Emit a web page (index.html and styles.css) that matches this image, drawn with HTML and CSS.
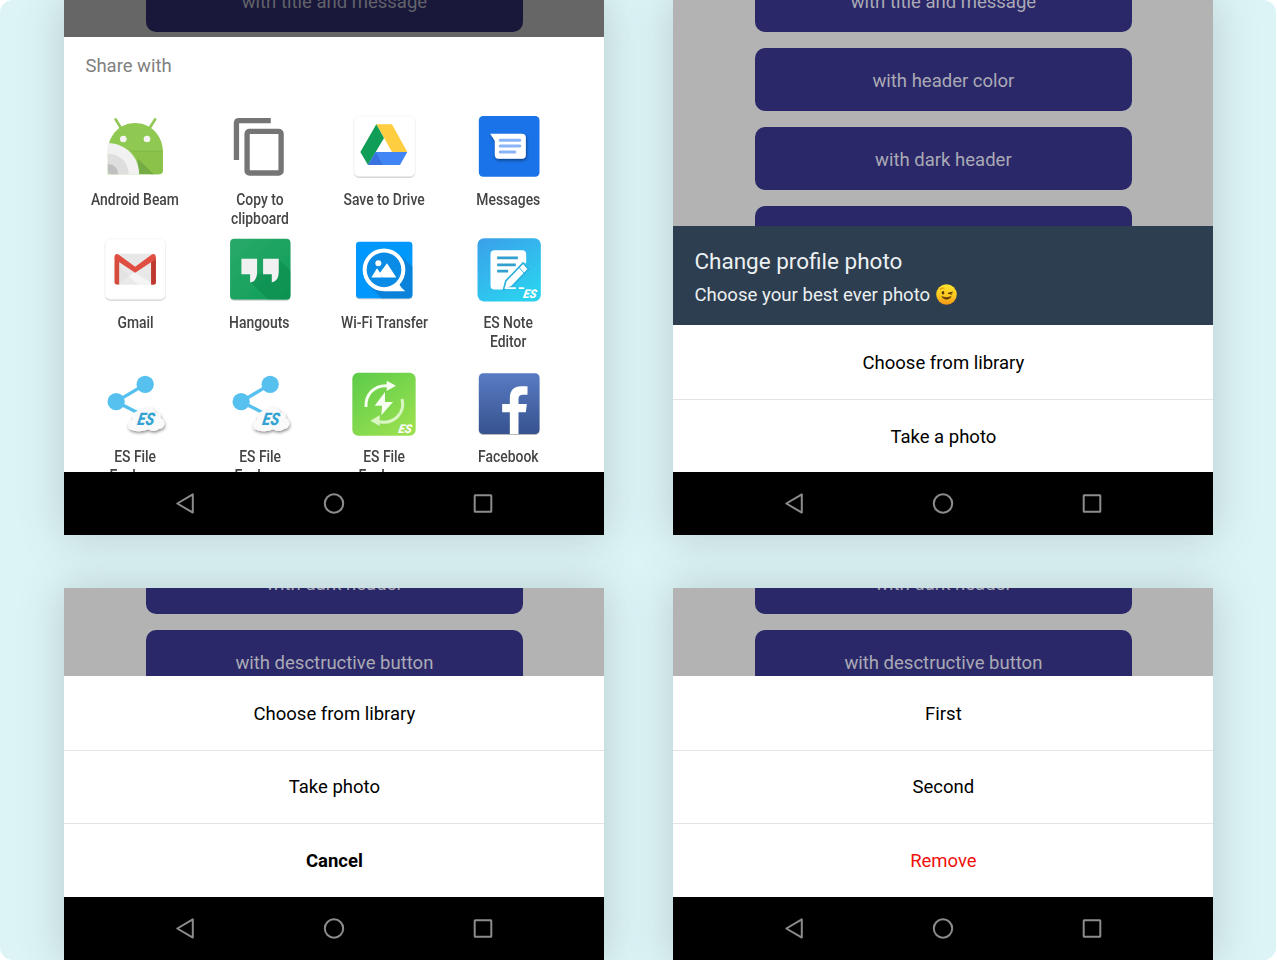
FILE: index.html
```html
<!DOCTYPE html>
<html lang="en">
<head>
<meta charset="utf-8">
<title>Action sheets</title>
<link rel="stylesheet" href="styles.css">
</head>
<body>
<svg class="defs" width="0" height="0">
  <defs>
    <g id="nav-icons" fill="none" stroke="#8c8c8c" stroke-width="2" stroke-linejoin="round">
      <path d="M9.300 31.500 24.800 22.400V40.600Z"/>
      <circle cx="166" cy="31.500" r="9.200"/>
      <rect x="306.700" y="23.200" width="16.600" height="16.600" rx=".5"/>
    </g>
    <g id="es-share">
      <path d="M170 125 257 73M170 125 235 158" stroke="#56c1ef" stroke-width="10" fill="none"/>
      <circle cx="170" cy="125" r="26" fill="#56c1ef"/><circle cx="257" cy="73" r="26" fill="#56c1ef"/>
      <path d="M216 210C202 207 202 184 218 180C216 160 232 148 245 154C252 136 284 137 288 159C302 157 306 166 303 174C320 181 318 206 299 207Q282 218 266 208Q244 219 216 210Z" fill="#fafafa" filter="url(#cloud)"/>
      <text transform="translate(232 196) skewX(-10)" class="es es-blue" textLength="50" lengthAdjust="spacingAndGlyphs">ES</text>
    </g>
    <filter id="cloud" x="-20%" y="-20%" width="140%" height="150%"><feDropShadow dx="2" dy="5" stdDeviation="4" flood-opacity=".45"/></filter>
    <filter id="soft" x="-20%" y="-20%" width="140%" height="150%"><feDropShadow dx="0" dy="3" stdDeviation="1.500" flood-opacity=".28"/></filter>
    <linearGradient id="g-note" x1="0" y1="0" x2=".6" y2="1"><stop stop-color="#3b9fea"/><stop offset="1" stop-color="#2bd0ef"/></linearGradient>
    <linearGradient id="g-green" x1="0" y1="0" x2=".7" y2="1"><stop stop-color="#5bcb4a"/><stop offset="1" stop-color="#98e04f"/></linearGradient>
    <linearGradient id="g-fb" x1="0" y1="0" x2="0" y2="1"><stop stop-color="#587bc3"/><stop offset="1" stop-color="#37528f"/></linearGradient>
    <linearGradient id="g-hang" x1="0" y1="0" x2="1" y2="1"><stop stop-color="#2aaa69"/><stop offset="1" stop-color="#0f9d58"/></linearGradient>
    <linearGradient id="g-emoji" x1="0" y1="0" x2="0" y2="1"><stop stop-color="#ffe32e"/><stop offset=".6" stop-color="#fcc51f"/><stop offset="1" stop-color="#f29418"/></linearGradient>
  </defs>
</svg>
<main class="board">
  <section class="phone">
    <div class="backdrop backdrop-share">
      <div class="btn">with title and message</div>
    </div>
    <div class="share">
      <h2 class="share-title">Share with</h2>
      <div class="apps">
        <div class="app">
          <svg class="app-icon" viewBox="121.500 336 210 210">
            <path d="M168 358 184 383M287 358 271 383" stroke="#92c755" stroke-width="8" stroke-linecap="round"/>
            <path d="M145 523V450C148 402 184 369 227 369S307 402 310 450V511Q310 523 298 523Z" fill="#8fc952"/>
            <path d="M216 453H310V511Q310 523 298 523H274L235 480Z" fill="#8bc34a"/>
            <path d="M234 475 282 523H238Z" fill="#699c3f" opacity=".65"/>
            <path d="M214 453H310" stroke="#7bb443" stroke-width="2"/>
            <path d="M145 429C200 431 238 470 239 523H157Q145 523 145 511Z" fill="#f1f1f1"/>
            <path d="M145 461C181 461 207 487 207 523H157Q145 523 145 511Z" fill="#dedede"/>
            <path d="M145 492C163 492 176 505 176 523H157Q145 523 145 511Z" fill="#c0c0c0"/>
            <circle cx="191.500" cy="417" r="10" fill="#f4f4f4"/><circle cx="262.500" cy="417" r="10" fill="#f4f4f4"/>
          </svg>
          <span class="app-name">Android Beam</span>
        </div>
        <div class="app">
          <svg class="app-icon" viewBox="494.700 336 210 210" fill="none" stroke="#757575" stroke-width="16">
            <path d="M529 480V370Q529 362 537 362H632"/>
            <rect x="561" y="394" width="102" height="125" rx="7"/>
          </svg>
          <span class="app-name">Copy to<br>clipboard</span>
        </div>
        <div class="app">
          <svg class="app-icon" viewBox="58 336 210 210">
            <rect x="73" y="348" width="183" height="181" rx="14" fill="#fff" stroke="#eee" stroke-width="1.500" filter="url(#soft)"/>
            <path d="M140 373H187L233 456H187Z" fill="#ffcd40"/>
            <path d="M140 373 163 414 115 495 92 456Z" fill="#0f9d58"/>
            <path d="M138 456H233L211 495H115Z" fill="#4285f4"/>
            <path d="M138 456 159 495H115Z" fill="#3367d6" opacity=".65"/>
          </svg>
          <span class="app-name">Save to Drive</span>
        </div>
        <div class="app">
          <svg class="app-icon" viewBox="431.500 336 210 210">
            <rect x="446" y="348" width="182" height="182" rx="13" fill="#1a73e8"/>
            <path d="M480 401H575Q587 401 587 413V464Q587 476 575 476H506Q494 476 494 464V422Z" fill="#fff" filter="url(#cloud)"/>
            <path d="M510 421H569M510 438H569M510 456H554" stroke="#8ab4f8" stroke-width="9" stroke-linecap="round"/>
          </svg>
          <span class="app-name">Messages</span>
        </div>
        <div class="app">
          <svg class="app-icon" viewBox="121.500 31.500 210 210">
            <rect x="137" y="43" width="181" height="181" rx="14" fill="#fff" stroke="#eee" stroke-width="1.500" filter="url(#soft)"/>
            <path d="M172 88H282V180H172Z" fill="#e8e8e8"/>
            <path d="M172 180 225 143 282 180Z" fill="#f5f5f5"/>
            <path d="M172 120 235 180H172Z" fill="#dedede" opacity=".5"/>
            <path d="M165 98H179V180H171Q165 180 165 174ZM275 98H289V174Q289 180 283 180H275Z" fill="#d54b3e"/>
            <path d="M275 113 289 103V174Q289 180 283 180H275Z" fill="#be3a30"/>
            <path d="M165 98Q166 85 177 90L227 127 277 90Q288 85 289 98L287 105 227 145 167 105Z" fill="#e04e42"/>
          </svg>
          <span class="app-name">Gmail</span>
        </div>
        <div class="app">
          <svg class="app-icon" viewBox="494.700 31.500 210 210">
            <rect x="510" y="43" width="181" height="182" rx="12" fill="url(#g-hang)" filter="url(#soft)"/>
            <path d="M656 104 691 139V213Q691 225 679 225H624L572 173 590 150 610 147Z" fill="#0b8a4c" opacity=".55"/>
            <path d="M544 103H591V142Q591 171 570 174V149H544ZM609 103H656V142Q656 171 635 174V149H609Z" fill="#f1f1f1"/>
          </svg>
          <span class="app-name">Hangouts</span>
        </div>
        <div class="app">
          <svg class="app-icon" viewBox="58 31.500 210 210">
            <rect x="79" y="52" width="169" height="169" rx="10" fill="#0598fd" filter="url(#soft)"/>
            <path d="M213 92 248 127V211Q248 221 238 221H155L120 185Z" fill="#0a82da"/>
            <circle cx="163" cy="136" r="58" fill="#0a8be6" stroke="#fff" stroke-width="12"/>
            <path d="M166 188Q196 190 207 174Q211 188 227 200H165Z" fill="#fff"/>
            <circle cx="146" cy="116" r="9" fill="#fff"/>
            <path d="M125 159 142 131 151 145 172 116 200 159H159L150 146 158 159Z" fill="#fff"/>
          </svg>
          <span class="app-name">Wi-Fi Transfer</span>
        </div>
        <div class="app">
          <svg class="app-icon" viewBox="431.500 31.500 210 210">
            <rect x="442" y="41" width="190" height="190" rx="20" fill="url(#g-note)"/>
            <path d="M493 77H576Q588 77 588 89V114L523 180V195H493Q481 195 481 183V89Q481 77 493 77Z" fill="#fff"/>
            <path d="M501 100H563M501 121H557M501 140H534" stroke="#319fd0" stroke-width="8"/>
            <path d="M579 115 595 134 544 187 520 196 527 169Z" fill="#fff" stroke="#2bb3dd" stroke-width="5" stroke-linejoin="round"/>
            <path d="M566 128 582 146" stroke="#2bb3dd" stroke-width="3"/>
            <path d="M524 191H557M566 191H582" stroke="#fff" stroke-width="5"/>
            <text transform="translate(578 221) skewX(-10)" class="es es-small" textLength="40" lengthAdjust="spacingAndGlyphs">ES</text>
          </svg>
          <span class="app-name">ES Note<br>Editor</span>
        </div>
        <div class="app">
          <svg class="app-icon" viewBox="121.500 27 210 210"><use href="#es-share"/></svg>
          <span class="app-name">ES File<br>Explorer</span>
        </div>
        <div class="app">
          <svg class="app-icon" viewBox="121.500 27 210 210"><use href="#es-share"/></svg>
          <span class="app-name">ES File<br>Explorer</span>
        </div>
        <div class="app">
          <svg class="app-icon" viewBox="58 27 210 210">
            <rect x="68" y="38" width="190" height="189" rx="18" fill="url(#g-green)"/>
            <g fill="none" stroke="#f6fff0" stroke-width="9">
              <path d="M109 141C107 102 134 75 173 77"/>
              <path d="M217 117C228 158 193 194 149 185" stroke="#d8f5c2"/>
            </g>
            <path d="M171 62 199 77 171 93Z" fill="#f6fff0"/>
            <path d="M122 182 150 166V198Z" fill="#d8f5c2"/>
            <path d="M166 96 135 137H157L155 166 190 126H166Z" fill="#f6fff0"/>
            <text transform="translate(205 218) skewX(-10)" class="es es-small" textLength="40" lengthAdjust="spacingAndGlyphs">ES</text>
          </svg>
          <span class="app-name">ES File<br>Explorer</span>
        </div>
        <div class="app">
          <svg class="app-icon" viewBox="431.500 27 210 210">
            <rect x="446" y="40" width="182" height="182" rx="13" fill="url(#g-fb)" filter="url(#soft)"/>
            <path d="M539 222V157H516V132H539V115C539 91 551 79 573 79H592V104H579C569 104 565 108 565 117V132H590L587 157H565V222Z" fill="#fff"/>
          </svg>
          <span class="app-name">Facebook</span>
        </div>
      </div>
    </div>
    <div class="nav"><svg width="332" height="63"><use href="#nav-icons"/></svg></div>
  </section>

  <section class="phone">
    <div class="backdrop backdrop-header">
      <div class="btn">with title and message</div>
      <div class="btn">with header color</div>
      <div class="btn">with dark header</div>
      <div class="btn"></div>
    </div>
    <header class="sheet-header">
      <h2 class="sheet-title">Change profile photo</h2>
      <p class="sheet-message">Choose your best ever photo
        <svg class="emoji" viewBox="0 0 21 21"><circle cx="10.500" cy="10.500" r="10.300" fill="url(#g-emoji)"/><path d="M5.800 12.800Q10.500 17.500 15.200 12.800Q10.500 14.600 5.800 12.800Z" fill="#56340a" stroke="#56340a" stroke-width=".8" stroke-linejoin="round"/><ellipse cx="7" cy="8.700" rx="1.300" ry="1.700" fill="#56340a"/><path d="M12.500 9.400 16.200 8.200M12.800 9.300 15.800 10.200" stroke="#56340a" stroke-width="1.200" stroke-linecap="round"/><path d="M4.300 5.400Q5.800 3.600 8 4.200" fill="none" stroke="#d68a12" stroke-width="1.100" stroke-linecap="round"/></svg>
      </p>
    </header>
    <div class="options">
      <div class="option">Choose from library</div>
      <div class="option">Take a photo</div>
    </div>
    <div class="nav"><svg width="332" height="63"><use href="#nav-icons"/></svg></div>
  </section>

  <section class="phone">
    <div class="backdrop backdrop-list">
      <div class="btn">with dark header</div>
      <div class="btn">with desctructive button</div>
    </div>
    <div class="options">
      <div class="option">Choose from library</div>
      <div class="option">Take photo</div>
      <div class="option option-cancel">Cancel</div>
    </div>
    <div class="nav"><svg width="332" height="63"><use href="#nav-icons"/></svg></div>
  </section>

  <section class="phone">
    <div class="backdrop backdrop-list">
      <div class="btn">with dark header</div>
      <div class="btn">with desctructive button</div>
    </div>
    <div class="options">
      <div class="option">First</div>
      <div class="option">Second</div>
      <div class="option option-remove">Remove</div>
    </div>
    <div class="nav"><svg width="332" height="63"><use href="#nav-icons"/></svg></div>
  </section>
</main>
</body>
</html>
```
FILE: styles.css
```css
* { box-sizing: border-box; }
body {
  margin: 0;
  background: #fff;
  font-family: Roboto, sans-serif;
  font-size: 18.500px;
  color: #000;
}
.defs { position: absolute; }
h2, p { margin: 0; font-weight: 400; }

.board {
  width: 1276px;
  height: 960px;
  padding-left: 64.400px;
  display: grid;
  grid-template-columns: 540px 540px;
  grid-template-rows: 535.400px 372.400px;
  column-gap: 69px;
  row-gap: 52.200px;
  background: #dcf4f5;
  border-radius: 13px;
  overflow: hidden;
}
.phone {
  display: flex;
  flex-direction: column;
  background: #fff;
  box-shadow: 0 0 40px rgba(80, 90, 95, .26);
}

.backdrop {
  flex: none;
  display: flex;
  flex-direction: column;
  align-items: center;
  gap: 16px;
  overflow: hidden;
  background: #b3b3b3;
}
.backdrop .btn:first-child { margin-top: -31.200px; }
.backdrop-share { height: 37.400px; background: #666; }
.backdrop-header { height: 226.400px; }
.backdrop-list { height: 88.400px; }
.backdrop-list .btn:first-child { margin-top: -36.800px; }
.btn {
  flex: none;
  width: 377.500px;
  height: 63px;
  border-radius: 10px;
  background: #2b2869;
  color: #aaaab5;
  text-align: center;
  line-height: 66px;
}
.backdrop-share .btn { background: #19183b; color: #62626a; }

.share {
  flex: 1;
  min-height: 0;
  overflow: hidden;
}
.share-title {
  padding: 17px 0 0 21px;
  font-size: 18.500px;
  line-height: 24px;
  color: #808080;
}
.apps {
  padding: 33.500px 0 0 8.800px;
  display: grid;
  grid-template-columns: repeat(4, 124.400px);
  grid-template-rows: 123.500px 133.700px 124px;
}
.app {
  display: flex;
  flex-direction: column;
  align-items: center;
}
.app-icon { width: 70px; height: 70px; flex: none; }
.app-name {
  margin-top: 8px;
  font-size: 15.800px;
  font-weight: 500;
  line-height: 19px;
  text-align: center;
  white-space: nowrap;
  color: #444;
  transform: scaleX(.88);
}
.es {
  font-family: Roboto, sans-serif;
  font-weight: 900;
  font-style: italic;
}
.es-blue { font-size: 52px; fill: #35a3d2; }
.es-small { font-size: 36px; fill: #fff; }

.sheet-header {
  height: 98.500px;
  padding: 20.500px 21px 0;
  background: #2d3e50;
  color: #ecf0f1;
}
.sheet-title { font-size: 22.500px; line-height: 28px; }
.sheet-message {
  margin-top: 8px;
  display: flex;
  align-items: center;
  gap: 5.500px;
  font-size: 18.600px;
  line-height: 24px;
}
.emoji { width: 21px; height: 21px; }

.options { flex: 1; display: flex; flex-direction: column; }
.option {
  flex: 1;
  display: flex;
  align-items: center;
  justify-content: center;
  padding-top: 2px;
}
.option + .option { border-top: 1px solid #e4e4e4; padding-top: 1px; }
.option-cancel { font-weight: 700; }
.option-remove { color: #f0100c; }

.nav {
  height: 63px;
  flex: none;
  display: flex;
  justify-content: center;
  background: #000;
}
```
